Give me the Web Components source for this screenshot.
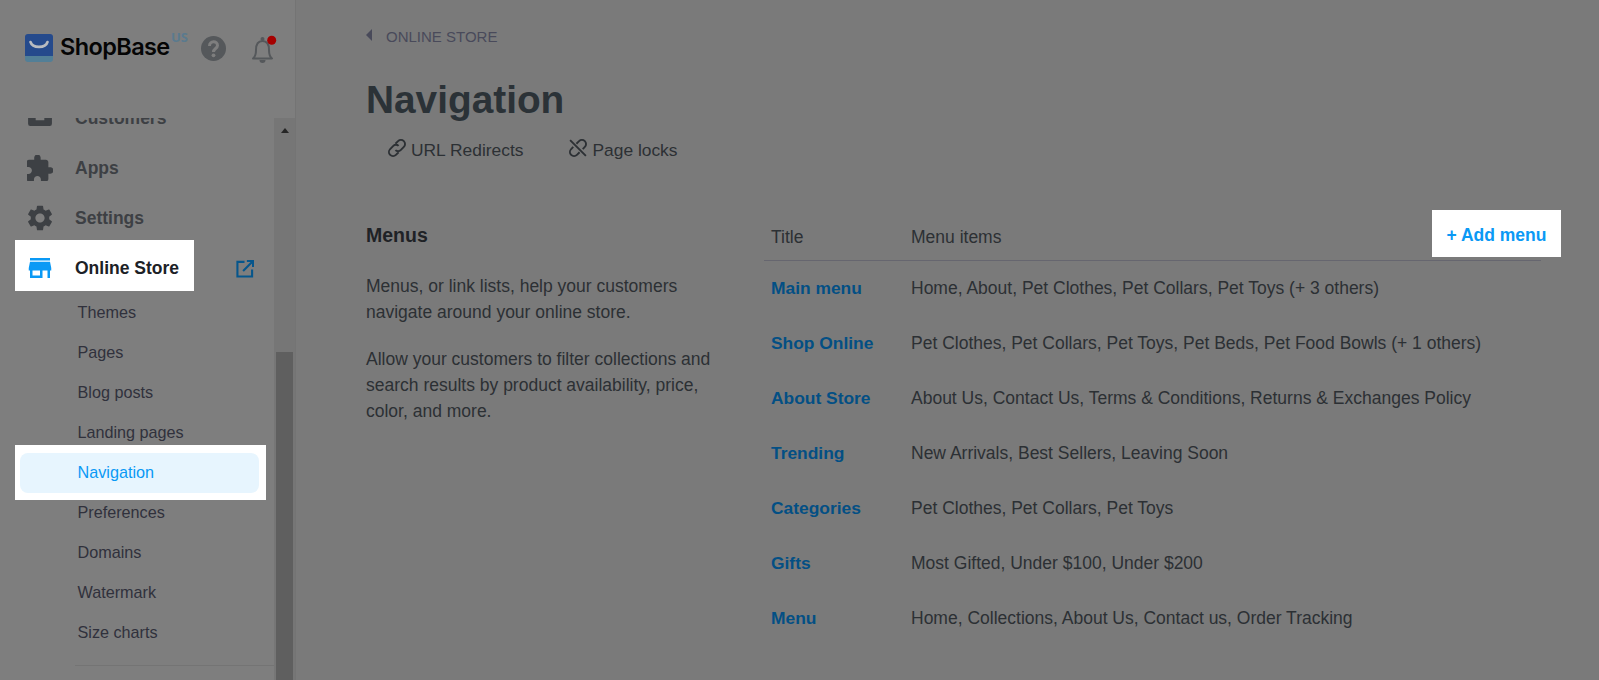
<!DOCTYPE html>
<html>
<head>
<meta charset="utf-8">
<title>Navigation</title>
<style>
  html, body { margin: 0; height: 680px; overflow: hidden; background: #7a7a7a; }
  body { font-family: "Liberation Sans", Arial, sans-serif; display: flex; }
</style>
</head>
<body>
<sb-sidebar>
  <sb-nav-item label="Customers" icon="customers"></sb-nav-item>
  <sb-nav-item label="Apps" icon="apps"></sb-nav-item>
  <sb-nav-item label="Settings" icon="settings"></sb-nav-item>
  <sb-nav-item label="Online Store" icon="store" spotlight></sb-nav-item>
  <sb-sub-item>Themes</sb-sub-item>
  <sb-sub-item>Pages</sb-sub-item>
  <sb-sub-item>Blog posts</sb-sub-item>
  <sb-sub-item>Landing pages</sb-sub-item>
  <sb-sub-item active>Navigation</sb-sub-item>
  <sb-sub-item>Preferences</sb-sub-item>
  <sb-sub-item>Domains</sb-sub-item>
  <sb-sub-item>Watermark</sb-sub-item>
  <sb-sub-item>Size charts</sb-sub-item>
</sb-sidebar>
<sb-main>
  <sb-menu-row slot="rows" name="Main menu">Home, About, Pet Clothes, Pet Collars, Pet Toys (+ 3 others)</sb-menu-row>
  <sb-menu-row slot="rows" name="Shop Online">Pet Clothes, Pet Collars, Pet Toys, Pet Beds, Pet Food Bowls (+ 1 others)</sb-menu-row>
  <sb-menu-row slot="rows" name="About Store">About Us, Contact Us, Terms &amp; Conditions, Returns &amp; Exchanges Policy</sb-menu-row>
  <sb-menu-row slot="rows" name="Trending">New Arrivals, Best Sellers, Leaving Soon</sb-menu-row>
  <sb-menu-row slot="rows" name="Categories">Pet Clothes, Pet Collars, Pet Toys</sb-menu-row>
  <sb-menu-row slot="rows" name="Gifts">Most Gifted, Under $100, Under $200</sb-menu-row>
  <sb-menu-row slot="rows" name="Menu">Home, Collections, About Us, Contact us, Order Tracking</sb-menu-row>
</sb-main>

<script>
// viewBox picks the crop of each 24px icon so it lands at the size in the design
const icons = {
  customers: { box: "0 0 24 24", d: "M3 0h18a2 2 0 0 1 2 2v15.400a2 2 0 0 1-2 2H3a2 2 0 0 1-2-2V2a2 2 0 0 1 2-2zM8 10v4.100h8V10z" },
  apps: { box: "2.400 1.400 20.200 20.200", d: "M20.500 11H19V7c0-1.100-.9-2-2-2h-4V3.500C13 2.120 11.880 1 10.500 1S8 2.120 8 3.500V5H4c-1.100 0-1.990.9-1.990 2v3.800H3.500c1.490 0 2.700 1.210 2.700 2.700s-1.210 2.700-2.700 2.700H2V20c0 1.100.9 2 2 2h3.800v-1.500c0-1.490 1.210-2.700 2.700-2.700 1.490 0 2.700 1.210 2.700 2.700V22H17c1.100 0 2-.9 2-2v-4h1.500c1.380 0 2.500-1.120 2.500-2.500S21.880 11 20.500 11z" },
  settings: { box: "1.850 1.850 20.300 20.300", d: "M19.140 12.940c.04-.3.06-.61.06-.94 0-.32-.02-.64-.07-.94l2.030-1.580c.18-.14.23-.41.12-.61l-1.920-3.320c-.12-.22-.37-.29-.59-.22l-2.390.96c-.5-.38-1.030-.7-1.620-.94l-.36-2.540c-.04-.24-.24-.41-.48-.41h-3.840c-.24 0-.43.17-.47.41l-.36 2.540c-.59.24-1.130.57-1.620.94l-2.390-.96c-.22-.08-.47 0-.59.22L2.740 8.870c-.12.21-.08.47.12.61l2.030 1.580c-.05.3-.09.63-.09.94s.02.64.07.94l-2.030 1.580c-.18.14-.23.41-.12.61l1.920 3.320c.12.22.37.29.59.22l2.390-.96c.5.38 1.030.7 1.620.94l.36 2.540c.05.24.24.41.48.41h3.840c.24 0 .44-.17.47-.41l.36-2.540c.59-.24 1.130-.56 1.620-.94l2.390.96c.22.08.47 0 .59-.22l1.920-3.320c.12-.22.07-.47-.12-.61l-2.010-1.580zM12 15.600c-1.980 0-3.600-1.620-3.600-3.600s1.620-3.600 3.600-3.600 3.600 1.620 3.600 3.600-1.620 3.600-3.600 3.600z" },
  store: { box: "1.600 1.600 20.800 20.800", d: "M20 4H4v2h16V4zm1 10v-2l-1-5H4l-1 5v2h1v6h10v-6h4v6h2v-6h1zm-9 4H6v-4h6v4z" }
}

class SbSidebar extends HTMLElement {
  constructor() {
    super()
    this.attachShadow({ mode: "open" }).innerHTML = `
    <style>
      :host { display: flex; flex-direction: column; flex: none; width: 295px; height: 680px; background: #7e7e7e; border-right: 1px solid #747474; }
      .head { flex: none; height: 118px; display: flex; align-items: flex-start; }
      .logo { width: 28px; height: 28px; margin: 34px 0 0 25px; flex: none; }
      .word { width: 111px; flex: none; font: 600 23.500px/30px Inter, "Noto Sans", sans-serif; letter-spacing: -.6px; color: #050505; margin: 32px 0 0 7px; }
      .us { width: 17px; flex: none; font: bold 13px/14px "Open Sans", sans-serif; color: #5a7a8e; margin: 30px 0 0 0; }
      .help { width: 25px; height: 25px; margin: 36px 0 0 13px; flex: none; }
      .bell { width: 26px; height: 28px; margin: 35px 0 0 25px; flex: none; overflow: visible; }
      .body { flex: 1; min-height: 0; display: flex; }
      .scroll { flex: 1; min-width: 0; overflow: hidden; }
      .list { margin-top: -25px; display: flex; flex-direction: column; }
      .rule { height: 1px; background: #747474; margin: 12px 0 0 75px; }
      .bar { flex: none; width: 21px; background: #767676; display: flex; flex-direction: column; align-items: center; }
      .up { width: 0; height: 0; border: 4.500px solid transparent; border-top: 0; border-bottom: 5px solid #262626; margin-top: 10px; }
      .thumb { width: 17px; flex: 1; background: #5f5f5f; margin-top: 219px; }
    </style>
    <div class="head">
      <svg class="logo" viewBox="0 0 28 28">
        <path fill="#254a8c" d="M3 0h22a3 3 0 0 1 3 3v20H0V3a3 3 0 0 1 3-3z"/>
        <path fill="#527f97" d="M0 22h28v3a3 3 0 0 1-3 3H3a3 3 0 0 1-3-3z"/>
        <path fill="none" stroke="#b9bcc0" stroke-width="2.600" stroke-linecap="round" d="M5.500 8c2 6.500 15 6.500 17 0"/>
      </svg>
      <span class="word">ShopBase</span>
      <span class="us">US</span>
      <svg class="help" viewBox="0 0 25 25">
        <circle cx="12.500" cy="12.500" r="12.500" fill="#55585b"/>
        <path fill="none" stroke="#7e7e7e" stroke-width="3" d="M8.500 10c0-5.500 8-5.500 8-.5 0 3-4 3-4 6.500"/>
        <circle cx="12.500" cy="19.300" r="1.900" fill="#7e7e7e"/>
      </svg>
      <svg class="bell" viewBox="0 0 26 28">
        <path fill="none" stroke="#55585b" stroke-width="2" stroke-linejoin="round" d="M2 23.500c2.500-2 3-4 3-8.500 0-6 2.500-9 6.500-9s6.500 3 6.500 9c0 4.500.5 6.500 3 8.500z"/>
        <circle cx="11.500" cy="4" r="2" fill="#55585b"/>
        <path fill="#55585b" d="M8.500 25h6a3 3 0 0 1-6 0z"/>
        <circle cx="20.700" cy="5.300" r="4.500" fill="#a60000"/>
      </svg>
    </div>
    <div class="body">
      <div class="scroll"><div class="list"><slot></slot><div class="rule"></div></div></div>
      <div class="bar"><i class="up"></i><i class="thumb"></i></div>
    </div>`
  }
}

class SbNavItem extends HTMLElement {
  constructor() {
    super()
    this.attachShadow({ mode: "open" })
  }

  connectedCallback() {
    const lit = this.hasAttribute("spotlight")
    const icon = icons[this.getAttribute("icon")]
    this.shadowRoot.innerHTML = `
    <style>
      :host { display: flex; align-items: center; height: 50px; }
      :host([spotlight]) { height: 51px; margin: -3px 0 2px; }
      .box { display: flex; align-items: center; gap: 22px; height: 100%; padding-left: 27px; box-sizing: border-box; color: #3d4044; font: bold 17.500px "Liberation Sans", Arial, sans-serif; fill: #3d4044; }
      :host([spotlight]) .box { background: #fff; color: #1c2126; fill: #0a99f5; margin-left: 15px; padding: 6px 15px 0 12px; }
      :host([spotlight]) svg.i { margin-top: -2px; }
      svg.i { width: 26px; height: 26px; flex: none; }
      .ext { width: 18px; height: 18px; margin: 6px 0 0 42px; flex: none; }
    </style>
    <div class="box">
      <svg class="i" viewBox="${icon.box}" fill-rule="evenodd"><path d="${icon.d}"/></svg>
      <span>${this.getAttribute("label")}</span>
    </div>
    ${lit ? `<svg class="ext" viewBox="0 0 19 19" fill="none" stroke="#06568c" stroke-width="2.200"><path d="M9 2H1.500v15.500H17V10M11.500 1H18v6.500M18 1L7.500 11.500"/></svg>` : ""}`
  }
}

class SbSubItem extends HTMLElement {
  constructor() {
    super()
    this.attachShadow({ mode: "open" }).innerHTML = `
    <style>
      :host { display: block; height: 40px; font: 16.200px/38px "Liberation Sans", Arial, sans-serif; color: #30313c; }
      .row { padding-left: 77.500px; height: 40px; }
      :host([active]) { height: 55px; margin: -8px 0 -7px; }
      :host([active]) .wrap { background: #fff; margin-left: 15px; width: 251px; height: 55px; padding: 8px 0 0 5px; box-sizing: border-box; }
      :host([active]) .row { background: #e7f5fe; color: #0a99f5; border-radius: 8px; width: 239px; padding-left: 57.500px; box-sizing: border-box; }
    </style>
    <div class="wrap"><div class="row"><slot></slot></div></div>`
  }
}

class SbMain extends HTMLElement {
  constructor() {
    super()
    this.attachShadow({ mode: "open" }).innerHTML = `
    <style>
      :host { display: block; flex: 1; min-width: 0; padding-left: 70px; box-sizing: border-box; color: #2c3034; font-family: "Liberation Sans", Arial, sans-serif; }
      .crumb { display: flex; align-items: center; gap: 14px; height: 20px; margin-top: 26px; font-size: 15px; color: #494a5a; }
      .crumb i { width: 0; height: 0; border: 6px solid transparent; border-left: 0; border-right: 6px solid #494a5a; margin-top: -3px; }
      h1 { font: bold 38.800px/46px "Liberation Sans", Arial, sans-serif; margin: 31px 0 0; color: #2b3237; }
      .tabs { display: flex; gap: 45px; margin: 15px 0 0 21px; font-size: 17.400px; line-height: 24px; }
      .tab { display: flex; align-items: center; gap: 4px; }
      .tab svg { width: 20px; height: 20px; margin-top: -5px; }
      .cols { display: flex; margin-top: 61px; }
      .side { width: 398px; flex: none; font-size: 17.500px; line-height: 26.250px; }
      h2 { font: bold 19.500px/24px "Liberation Sans", Arial, sans-serif; margin: 0 0 26px; color: #1f2226; }
      p { margin: 0 0 20px; width: 350px; }
      .tbl { width: 777px; flex: none; margin-top: -13px; }
      .head { display: flex; align-items: flex-start; height: 50px; border-bottom: 1px solid #66666f; padding-left: 7px; font-size: 17.500px; line-height: 55px; }
      .head .t { width: 140px; }
      .add { margin-left: auto; margin-right: -20px; background: #fff; color: #0a99f5; font-weight: bold; width: 129px; height: 47px; line-height: 50px; text-align: center; }
    </style>
    <div class="crumb"><i></i><span>ONLINE STORE</span></div>
    <h1>Navigation</h1>
    <div class="tabs">
      <div class="tab"><svg viewBox="0 0 19 19" fill="none" stroke="#2c3034" stroke-width="1.800"><path d="M8 5.500l2.500-2.500a3.500 3.500 0 0 1 5.500 5.500l-3 3a3.500 3.500 0 0 1-5 0M11 13.500l-2.500 2.500a3.500 3.500 0 0 1-5.500-5.500l3-3a3.500 3.500 0 0 1 5 0"/></svg><span>URL Redirects</span></div>
      <div class="tab"><svg viewBox="0 0 19 19" fill="none" stroke="#2c3034" stroke-width="1.800"><path d="M8 5.500l2.500-2.500a3.500 3.500 0 0 1 5.500 5.500l-2 2M11 13.500l-2.500 2.500a3.500 3.500 0 0 1-5.500-5.500l2-2M2 2l15 15"/></svg><span>Page locks</span></div>
    </div>
    <div class="cols">
      <div class="side">
        <h2>Menus</h2>
        <p>Menus, or link lists, help your customers navigate around your online store.</p>
        <p>Allow your customers to filter collections and search results by product availability, price, color, and more.</p>
      </div>
      <div class="tbl">
        <div class="head"><span class="t">Title</span><span>Menu items</span><span class="add">+ Add menu</span></div>
        <slot name="rows"></slot>
      </div>
    </div>`
  }
}

class SbMenuRow extends HTMLElement {
  constructor() {
    super()
    this.attachShadow({ mode: "open" })
  }

  connectedCallback() {
    this.shadowRoot.innerHTML = `
    <style>
      :host { display: flex; height: 55px; align-items: center; padding-left: 7px; font-size: 17.500px; color: #2c3034; }
      b { width: 140px; flex: none; color: #034f84; font-size: 17.400px; }
    </style>
    <b>${this.getAttribute("name")}</b><span><slot></slot></span>`
  }
}

customElements.define("sb-sidebar", SbSidebar)
customElements.define("sb-nav-item", SbNavItem)
customElements.define("sb-sub-item", SbSubItem)
customElements.define("sb-main", SbMain)
customElements.define("sb-menu-row", SbMenuRow)
</script>
</body>
</html>
